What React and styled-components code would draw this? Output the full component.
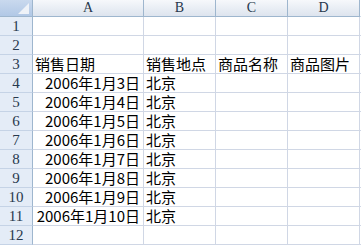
import React from "react";
import styled, { createGlobalStyle } from "styled-components";

const GlobalStyle = createGlobalStyle`
  html, body {
    margin: 0;
    padding: 0;
    background: #fff;
  }
  body {
    font-family: "Noto Sans CJK SC", "Noto Sans", sans-serif;
  }
`;

const Sheet = styled.div`
  display: grid;
  grid-template-columns: 33px 111px 72px 72px 72px 1fr;
  grid-auto-rows: 19px;
  grid-template-rows: 17px;
  width: 361px;
  height: 248px;
  overflow: hidden;
  background: #fff;
`;

const Corner = styled.div`
  position: relative;
  box-sizing: border-box;
  background: linear-gradient(#c9d9ee, #b1c8e6);
  border-right: 1px solid #9eb6ce;
  border-bottom: 1px solid #9eb6ce;
  &::after {
    content: "";
    position: absolute;
    right: 3px;
    bottom: 2px;
    width: 0;
    height: 0;
    border-left: 11px solid transparent;
    border-bottom: 11px solid #eef2f8;
  }
`;

const ColHead = styled.div`
  box-sizing: border-box;
  display: flex;
  align-items: center;
  justify-content: center;
  background: linear-gradient(#f6f8fb, #dde4ee);
  border-right: 1px solid ${(p) => (p.$last ? "transparent" : "#9eb6ce")};
  border-bottom: 1px solid #9eb6ce;
  font-family: "Liberation Serif", serif;
  font-size: 14px;
  color: #27384d;
  line-height: 16px;
`;

const RowHead = styled.div`
  box-sizing: border-box;
  display: flex;
  align-items: center;
  justify-content: center;
  background: #e4ecf7;
  border-right: 1px solid #9eb6ce;
  border-bottom: 1px solid #c5d3e6;
  font-family: "Liberation Serif", serif;
  font-size: 15px;
  color: #27384d;
`;

const Cell = styled.div`
  box-sizing: border-box;
  display: flex;
  align-items: center;
  justify-content: ${(p) => (p.$right ? "flex-end" : "flex-start")};
  padding: 0 3px 0 2px;
  border-right: 1px solid #d0d7e5;
  border-bottom: 1px solid #d0d7e5;
  font-size: 15px;
  line-height: 18px;
  color: #000;
  white-space: nowrap;
  overflow: visible;
`;

const Filler = styled.div`
  box-sizing: border-box;
  border-bottom: 1px solid #d0d7e5;
`;

const cols = ["A", "B", "C", "D"];

const rows = [
  [],
  [],
  [{ v: "销售日期" }, { v: "销售地点" }, { v: "商品名称" }, { v: "商品图片" }],
  ...[3, 4, 5, 6, 7, 8, 9, 10].map((d) => [
    { v: `2006年1月${d}日`, right: true },
    { v: "北京" },
  ]),
  [],
];

export default function App() {
  return (
    <>
      <GlobalStyle />
      <Sheet>
        <Corner />
        {cols.map((c) => (
          <ColHead key={c}>{c}</ColHead>
        ))}
        <ColHead $last />
        {rows.map((r, i) => (
          <React.Fragment key={i}>
            <RowHead>{i + 1}</RowHead>
            {cols.map((c, j) => (
              <Cell key={c} $right={r[j] && r[j].right}>
                {r[j] ? r[j].v : ""}
              </Cell>
            ))}
            <Filler />
          </React.Fragment>
        ))}
      </Sheet>
    </>
  );
}
